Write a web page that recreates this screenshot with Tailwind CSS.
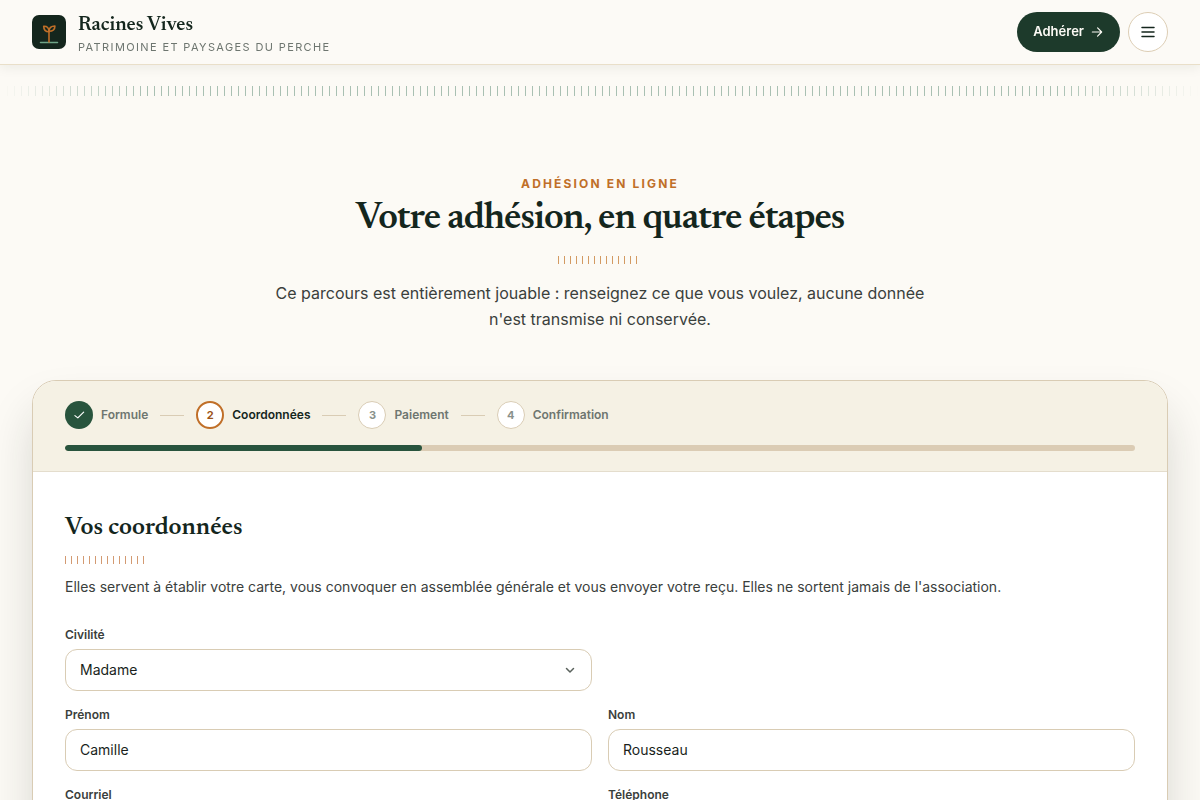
<!doctype html>
<html lang="fr">
  <head>
    <meta charset="UTF-8" />
    <meta name="viewport" content="width=device-width, initial-scale=1.0" />
    <title>Racines Vives - Adhésion en ligne</title>
    <script src="https://cdn.jsdelivr.net/npm/@tailwindcss/browser@4"></script>
  </head>
  <body class="min-h-screen bg-[#fcfaf5] font-['Inter','Liberation_Sans',sans-serif] text-[#1a1f1c]">
    <header class="sticky top-0 z-10 flex h-[65px] items-center justify-between border-b border-[#e9dfc9] bg-[#fcfaf5]/95 px-8 shadow-[0_2px_12px_rgba(20,38,29,0.08)] backdrop-blur-sm">
      <a href="#" class="flex items-center gap-3">
        <svg class="size-[34px]" viewBox="0 0 34 34" fill="none" stroke-linecap="round" stroke-linejoin="round" aria-hidden="true">
          <rect width="34" height="34" rx="7" fill="#14261d" />
          <path d="M8.5 27.5h17" stroke="#6fa588" stroke-width="1.500" />
          <g stroke="#c06f28" stroke-width="1.600">
            <path d="M17 27V17" />
            <path d="M17 16.800c-3.600 0-5.300-2-5.300-5.500 3.400-.3 5.300 1.700 5.300 5.500z" />
            <path d="M17 16.300c0-3.300 2-5.300 5.900-5.300 0 3.300-2 5.300-5.900 5.300z" />
          </g>
        </svg>
        <span class="flex flex-col pt-0.5">
          <span class="font-['Newsreader','Liberation_Serif',serif] text-xl leading-7 font-semibold text-[#14261d]">Racines Vives</span>
          <span class="text-[11px] leading-4 tracking-[0.125em] text-[#6e7670] uppercase">Patrimoine et paysages du Perche</span>
        </span>
      </a>
      <div class="flex items-center gap-2">
        <a href="#" class="flex h-10 items-center gap-1.5 rounded-full bg-[#1d3a2b] px-4 text-[13px] font-semibold text-[#fcfaf5]">
          Adhérer
          <svg class="size-3.5" viewBox="0 0 24 24" fill="none" stroke="currentColor" stroke-width="2" stroke-linecap="round" stroke-linejoin="round" aria-hidden="true">
            <path d="M4 12h16M13 5l7 7-7 7" />
          </svg>
        </a>
        <button type="button" aria-label="Menu" class="flex size-10 items-center justify-center rounded-full border border-[#dccdb4] bg-white text-[#14261d]">
          <svg class="size-[18px]" viewBox="0 0 24 24" fill="none" stroke="currentColor" stroke-width="2" stroke-linecap="round" aria-hidden="true">
            <path d="M4 6h16M4 12h16M4 18h16" />
          </svg>
        </button>
      </div>
    </header>

    <!-- hedge band -->
    <div class="mt-[21px] h-2.5 bg-[repeating-linear-gradient(90deg,#a9c0b2_0_1px,transparent_1px_7px)] mask-[linear-gradient(90deg,transparent,black_12%,black_88%,transparent)]"></div>

    <main class="px-8 pt-20 pb-16">
      <div class="mx-auto flex max-w-[680px] flex-col items-center text-center">
        <p class="text-xs leading-4 font-bold tracking-[0.18em] text-[#c06f28] uppercase">Adhésion en ligne</p>
        <h1 class="mt-1 font-['Newsreader','Liberation_Serif',serif] text-[38px] leading-[46px] font-semibold tracking-tight text-[#14261d]">Votre adhésion, en quatre étapes</h1>
        <div class="mt-3.5 h-2 w-[84px] bg-[repeating-linear-gradient(90deg,#d39a62_0_1px,transparent_1px_6px)]"></div>
        <p class="mt-4 text-base leading-[26px] text-[#3a403c]">Ce parcours est entièrement jouable : renseignez ce que vous voulez, aucune donnée n'est transmise ni conservée.</p>
      </div>

      <section class="mt-12 overflow-hidden rounded-3xl border border-[#d9ccb4] bg-white shadow-[0_28px_48px_-4px_rgba(28,34,28,0.18)]">
        <div class="border-b border-[#e4ddcd] bg-[#f5f1e4] px-8 py-5">
          <ol class="flex items-center gap-3 text-xs font-semibold text-[#6e7670]">
            <li class="flex items-center gap-2">
              <span class="flex size-7 items-center justify-center rounded-full bg-[#28543d] text-white">
                <svg class="size-3.5" viewBox="0 0 24 24" fill="none" stroke="currentColor" stroke-width="2" stroke-linecap="round" stroke-linejoin="round" aria-hidden="true">
                  <path d="M20 7L10 17l-5-4" />
                </svg>
              </span>
              Formule
            </li>
            <li class="h-px w-6 bg-[#d9ccb4]" aria-hidden="true"></li>
            <li class="flex items-center gap-2 text-[#14261d]" aria-current="step">
              <span class="flex size-7 items-center justify-center rounded-full border-2 border-[#c06f28] bg-white text-[11px] font-bold text-[#9c5418]">2</span>
              Coordonnées
            </li>
            <li class="h-px w-6 bg-[#d9ccb4]" aria-hidden="true"></li>
            <li class="flex items-center gap-2">
              <span class="flex size-7 items-center justify-center rounded-full border border-[#d9ccb4] bg-white text-[11px] font-bold text-[#8a918c]">3</span>
              Paiement
            </li>
            <li class="h-px w-6 bg-[#d9ccb4]" aria-hidden="true"></li>
            <li class="flex items-center gap-2">
              <span class="flex size-7 items-center justify-center rounded-full border border-[#d9ccb4] bg-white text-[11px] font-bold text-[#8a918c]">4</span>
              Confirmation
            </li>
          </ol>
          <div class="mt-4 h-1.5 overflow-hidden rounded-full bg-[#dbccb4]">
            <div class="h-full w-1/3 rounded-full bg-[#28543d]"></div>
          </div>
        </div>

        <form class="px-8 pt-10 pb-8">
          <h2 class="font-['Newsreader','Liberation_Serif',serif] text-[25px] leading-[34px] font-semibold text-[#14261d]">Vos coordonnées</h2>
          <div class="mt-2.5 h-2 w-[84px] bg-[repeating-linear-gradient(90deg,#d39a72_0_1px,transparent_1px_6px)]"></div>
          <p class="mt-3 text-sm leading-[22px] text-[#3a403c]">Elles servent à établir votre carte, vous convoquer en assemblée générale et vous envoyer votre reçu. Elles ne sortent jamais de l'association.</p>

          <div class="mt-[29px] grid grid-cols-2 gap-4">
            <div class="flex flex-col gap-1.5">
              <label for="civilite" class="text-xs leading-4 font-semibold text-[#3a403c]">Civilité</label>
              <div class="relative">
                <select id="civilite" class="h-[42px] w-full appearance-none rounded-xl border border-[#d9ccb4] bg-white px-3.5 text-sm">
                  <option>Madame</option>
                  <option>Monsieur</option>
                </select>
                <svg class="pointer-events-none absolute inset-y-0 right-3.5 my-auto size-4 text-[#5a625d]" viewBox="0 0 16 16" fill="none" stroke="currentColor" stroke-width="1.500" stroke-linecap="round" stroke-linejoin="round" aria-hidden="true">
                  <path d="M4.500 6.500L8 10l3.500-3.500" />
                </svg>
              </div>
            </div>
            <div class="col-start-1 flex flex-col gap-1.5">
              <label for="prenom" class="text-xs leading-4 font-semibold text-[#3a403c]">Prénom</label>
              <input id="prenom" type="text" value="Camille" class="h-[42px] w-full rounded-xl border border-[#d9ccb4] bg-white px-3.5 pb-0.5 text-sm" />
            </div>
            <div class="flex flex-col gap-1.5">
              <label for="nom" class="text-xs leading-4 font-semibold text-[#3a403c]">Nom</label>
              <input id="nom" type="text" value="Rousseau" class="h-[42px] w-full rounded-xl border border-[#d9ccb4] bg-white px-3.5 pb-0.5 text-sm" />
            </div>
            <div class="flex flex-col gap-1.5">
              <label for="courriel" class="text-xs leading-4 font-semibold text-[#3a403c]">Courriel</label>
              <input id="courriel" type="email" class="h-[42px] w-full rounded-xl border border-[#d9ccb4] bg-white px-3.5 pb-0.5 text-sm" />
            </div>
            <div class="flex flex-col gap-1.5">
              <label for="telephone" class="text-xs leading-4 font-semibold text-[#3a403c]">Téléphone</label>
              <input id="telephone" type="tel" class="h-[42px] w-full rounded-xl border border-[#d9ccb4] bg-white px-3.5 pb-0.5 text-sm" />
            </div>
          </div>
        </form>
      </section>
    </main>
  </body>
</html>
